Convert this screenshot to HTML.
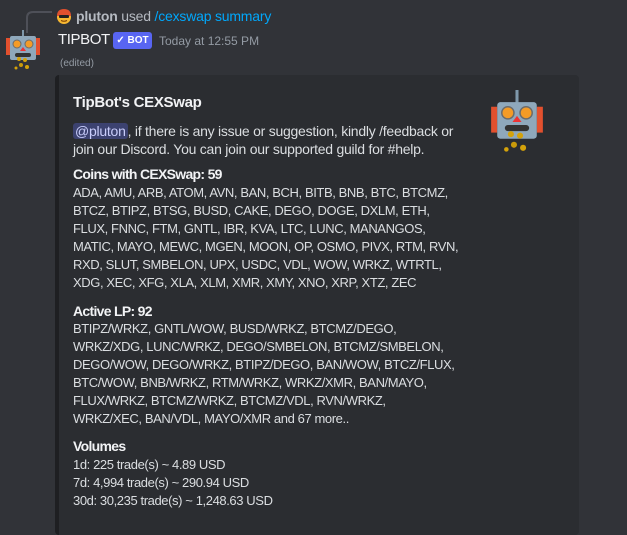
<!DOCTYPE html>
<html><head><meta charset="utf-8"><style>
*{margin:0;padding:0;box-sizing:border-box}
body{width:627px;height:517px;overflow:hidden;background:#313338;font-family:"Liberation Sans",sans-serif;color:#dbdee1;position:relative}
.abs{position:absolute;white-space:nowrap}
.embed{position:absolute;left:55px;top:75px;width:524px;height:460px;background:#2b2d31;border-left:4px solid #1e1f22;border-radius:4px}
.t{position:absolute;left:73px;font-size:13px;line-height:18px;white-space:nowrap;letter-spacing:-0.4px}
.b{font-weight:bold;color:#f2f3f5;font-size:14px;letter-spacing:-0.7px}
</style></head><body>
<svg class="abs" style="left:0;top:0" width="60" height="50">
<path d="M27 33 V18 Q27 12 33 12 H52" fill="none" stroke="#4e5058" stroke-width="2"/>
</svg>
<svg class="abs" style="left:56px;top:8px" width="16" height="16" viewBox="0 0 16 16">
<circle cx="8" cy="9" r="7" fill="#f7b731"/><path d="M1 8 Q1 1 8 1 Q15 1 15 8 Z" fill="#e0502e"/>
<rect x="3" y="7" width="10" height="3" rx="1" fill="#222"/><path d="M5 12.5 Q8 14 11 12.5" stroke="#7a3d00" fill="none"/>
</svg>
<div class="abs" style="left:76px;top:8px;font-size:14px;color:#b5bac1;letter-spacing:-0.2px"><b style="color:#b5bac1">pluton</b> used <span style="color:#00a8fc">/cexswap summary</span></div>

<svg class="abs" style="left:5px;top:29px" width="36" height="46" viewBox="0 0 36 46">
<rect x="1" y="9" width="4" height="17" fill="#e2502e"/><rect x="31" y="9" width="4" height="17" fill="#e2502e"/>
<rect x="17" y="1" width="2" height="7" fill="#7f98ab"/>
<rect x="5" y="7" width="26" height="24" rx="2" fill="#8fa8bb"/>
<circle cx="12" cy="15" r="4" fill="#f49b26" stroke="#6b6b6b"/><circle cx="24" cy="15" r="4" fill="#f49b26" stroke="#6b6b6b"/>
<path d="M18 18 L15 22 H21 Z" fill="#e33"/>
<rect x="10" y="24" width="16" height="4" rx="2" fill="#333"/>
<circle cx="14" cy="30" r="2" fill="#d4a20a"/><circle cx="20" cy="31" r="2" fill="#d4a20a"/><circle cx="16" cy="36" r="2" fill="#c99a0a"/><circle cx="22" cy="38" r="2" fill="#d4a20a"/><circle cx="11" cy="39" r="1.5" fill="#d4a20a"/>
</svg>
<div class="abs" style="left:58px;top:31px;font-size:15px;color:#f2f3f5;letter-spacing:-0.4px">TIPBOT</div>
<div class="abs" style="left:113px;top:32px;width:39px;height:17px;background:#5865f2;border-radius:3px;color:#fff;font-size:10px;font-weight:bold;line-height:17px;text-align:center">✓ BOT</div>
<div class="abs" style="left:159px;top:34px;font-size:12px;color:#949ba4">Today at 12:55 PM</div>
<div class="abs" style="left:60px;top:58px;font-size:10px;color:#949ba4">(edited)</div>

<div class="embed"></div>
<svg class="abs" style="left:484px;top:90px" width="66" height="70" viewBox="0 0 36 46">
<rect x="1" y="11" width="4" height="17" fill="#e2502e"/><rect x="31" y="11" width="4" height="17" fill="#e2502e"/>
<rect x="17" y="0" width="2" height="9" fill="#7f98ab"/>
<rect x="5" y="8" width="26" height="24" rx="2" fill="#8fa8bb"/>
<circle cx="12" cy="15" r="4" fill="#f49b26" stroke="#6b6b6b"/><circle cx="24" cy="15" r="4" fill="#f49b26" stroke="#6b6b6b"/>
<path d="M18 17 L15 21 H21 Z" fill="#e33"/>
<rect x="10" y="23" width="16" height="4" rx="2" fill="#333"/>
<circle cx="14" cy="29" r="2" fill="#d4a20a"/><circle cx="20" cy="30" r="2" fill="#d4a20a"/><circle cx="16" cy="36" r="2" fill="#c99a0a"/><circle cx="22" cy="38" r="2" fill="#d4a20a"/><circle cx="11" cy="39" r="1.5" fill="#d4a20a"/>
</svg>

<div class="t b" style="top:94px;font-size:15px;letter-spacing:-0.3px">TipBot's CEXSwap</div>
<div class="t" style="top:122px;font-size:14px;letter-spacing:-0.25px">
<span style="background:#3c4270;color:#c9cdfb;border-radius:3px;padding:0 2px">@pluton</span>, if there is any issue or suggestion, kindly /feedback or<br>join our Discord. You can join our supported guild for #help.</div>
<div class="t b" style="top:165px">Coins with CEXSwap: 59</div>
<div class="t" style="top:184px">ADA, AMU, ARB, ATOM, AVN, BAN, BCH, BITB, BNB, BTC, BTCMZ,<br>BTCZ, BTIPZ, BTSG, BUSD, CAKE, DEGO, DOGE, DXLM, ETH,<br>FLUX, FNNC, FTM, GNTL, IBR, KVA, LTC, LUNC, MANANGOS,<br>MATIC, MAYO, MEWC, MGEN, MOON, OP, OSMO, PIVX, RTM, RVN,<br>RXD, SLUT, SMBELON, UPX, USDC, VDL, WOW, WRKZ, WTRTL,<br>XDG, XEC, XFG, XLA, XLM, XMR, XMY, XNO, XRP, XTZ, ZEC</div>
<div class="t b" style="top:302px">Active LP: 92</div>
<div class="t" style="top:320px">BTIPZ/WRKZ, GNTL/WOW, BUSD/WRKZ, BTCMZ/DEGO,<br>WRKZ/XDG, LUNC/WRKZ, DEGO/SMBELON, BTCMZ/SMBELON,<br>DEGO/WOW, DEGO/WRKZ, BTIPZ/DEGO, BAN/WOW, BTCZ/FLUX,<br>BTC/WOW, BNB/WRKZ, RTM/WRKZ, WRKZ/XMR, BAN/MAYO,<br>FLUX/WRKZ, BTCMZ/WRKZ, BTCMZ/VDL, RVN/WRKZ,<br>WRKZ/XEC, BAN/VDL, MAYO/XMR and 67 more..</div>
<div class="t b" style="top:437px">Volumes</div>
<div class="t" style="top:456px">1d: 225 trade(s) ~ 4.89 USD<br>7d: 4,994 trade(s) ~ 290.94 USD<br>30d: 30,235 trade(s) ~ 1,248.63 USD</div>
</body></html>
